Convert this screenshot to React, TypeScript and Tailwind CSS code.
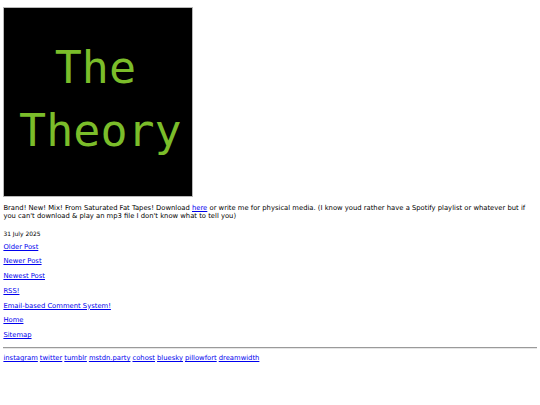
const SOCIAL = ["instagram", "twitter", "tumblr", "mstdn.party", "cohost", "bluesky", "pillowfort", "dreamwidth"];

const NAV = ["Older Post", "Newer Post", "Newest Post", "RSS!", "Email-based Comment System!", "Home", "Sitemap"];

export default function App() {
  return (
    <div className="min-h-[405px] bg-white px-[3.4px] pt-[6.8px] text-[6.8px] leading-[7.9px] text-black [font-family:'DejaVu_Sans',Verdana,sans-serif]">
      {/* cover */}
      <div className="flex h-[190px] w-[190px] flex-col items-center justify-center border border-[#b8b8b8] bg-black pb-[6px] text-[45px] leading-[63px] text-[#7bbd2a] [font-family:'DejaVu_Sans_Mono',monospace]">
        <span className="ml-[-6px]">The</span>
        <span className="ml-[4px]">Theory</span>
      </div>

      <p className="mt-[8.4px]">
        Brand! New! Mix! From Saturated Fat Tapes! Download{" "}
        <a href="#" className="text-[#0000ee] underline">here</a> or write me for physical media. (I know youd rather
        have a Spotify playlist or whatever but if you can't download &amp; play an mp3 file I don't know what to tell you)
      </p>

      <p className="mt-[9px] text-[5.95px] leading-[7px]">31 July 2025</p>

      <div className="mt-[6.6px] flex flex-col gap-[6.85px]">
        {NAV.map((n) => (
          <p key={n}>
            <a href="#" className="text-[#0000ee] underline">{n}</a>
          </p>
        ))}
      </div>

      <hr className="mt-[6.6px] border-t-[1px] border-b-[1px] border-t-[#9a9a9a] border-b-[#e6e6e6]" />

      <p className="mt-[6.8px] flex gap-[2px]">
        {SOCIAL.map((s) => (
          <a key={s} href="#" className="text-[#0000ee] underline">{s}</a>
        ))}
      </p>
    </div>
  );
}
